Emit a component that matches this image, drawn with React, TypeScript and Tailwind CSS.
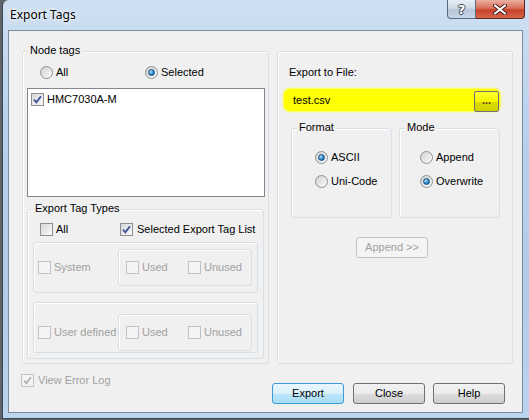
import React from "react";

const Check = ({ checked = false, disabled = false }: { checked?: boolean; disabled?: boolean }) => (
  <span
    className={`flex h-[13px] w-[13px] shrink-0 items-center justify-center border ${
      disabled ? "border-[#c2c2c2] bg-[#f4f4f4]" : "border-[#8e8f8f] bg-[linear-gradient(135deg,#d6d8da,#fafafa)]"
    }`}
  >
    {checked && (
      <svg width="9" height="9" viewBox="0 0 9 9">
        <path d="M1 4.6 L3.4 7.4 L8 1.2" fill="none" stroke={disabled ? "#b0b0b0" : "#3f4f96"} strokeWidth="1.8" />
      </svg>
    )}
  </span>
);

const Radio = ({ checked = false }: { checked?: boolean }) => (
  <span className="flex h-[13px] w-[13px] shrink-0 items-center justify-center rounded-full border border-[#8e8f8f] bg-[linear-gradient(135deg,#d0d2d4,#fbfbfb)]">
    {checked && (
      <span className="h-[7px] w-[7px] rounded-full border border-[#1c4f7e] bg-[radial-gradient(circle_at_35%_35%,#b6e2fb,#2a86cc_55%,#0d4b85)]" />
    )}
  </span>
);

const Group = ({ label, className = "", children }: { label?: string; className?: string; children?: React.ReactNode }) => (
  <div className={`relative rounded-[3px] border border-[#d5dfe5] shadow-[inset_1px_1px_0_#fff] ${className}`}>
    {label && <span className="absolute -top-[8px] left-[5px] bg-[#f0f0f0] px-[2px] leading-[13px]">{label}</span>}
    {children}
  </div>
);

const Btn = ({ children, kind = "normal", className = "" }: { children: React.ReactNode; kind?: "normal" | "default" | "disabled"; className?: string }) => {
  const look =
    kind === "default"
      ? "border-[#3c9bd8] bg-[linear-gradient(#eaf6fd,#d9f0fc_50%,#bee6fd_50%,#a9dcf6)] text-black"
      : kind === "disabled"
        ? "border-[#c0c3c6] bg-[#f4f4f4] text-[#a0a0a0]"
        : "border-[#707070] bg-[linear-gradient(#f2f2f2,#ebebeb_50%,#dddddd_50%,#cfcfcf)] text-black";
  return (
    <button className={`flex h-[21px] w-[72px] shrink-0 items-center justify-center rounded-[3px] border leading-[13px] ${look} ${className}`}>
      {children}
    </button>
  );
};

const Labeled = ({ children, disabled = false }: { children: React.ReactNode; disabled?: boolean }) => (
  <span className={disabled ? "text-[#a0a0a0]" : "text-black"}>{children}</span>
);

export default function App() {
  return (
    <div className="h-[420px] w-[529px] overflow-hidden bg-[#5f6468] font-['Liberation_Sans',Arial,sans-serif] text-[11px] leading-[13px]">
      <div className="ml-[2px] flex h-[419px] w-[527px] flex-col rounded-tl-[6px] border-b border-l border-[#3b4856] bg-[linear-gradient(180deg,#cfe0f2,#b8d1ec_30%,#b2cbe7_70%,#bcd4ee)]">
        {/* title bar */}
        <div className="flex h-[30px] shrink-0 items-start">
          <span className="pl-[7px] pt-[7px] font-['Noto_Sans',sans-serif] text-[12px] leading-[16px] text-black [text-shadow:0_0_6px_#fff,0_0_3px_#fff]">
            Export Tags
          </span>
          <div className="ml-auto mr-[4px] flex">
            <div className="flex h-[19px] w-[29px] items-center justify-center rounded-bl-[4px] border border-t-0 border-[#5b6a7b] bg-[linear-gradient(#e6eef6,#cfdbe8_45%,#b4c5d8_55%,#c9d8e8)]">
              <span className="font-['DejaVu_Sans',sans-serif] text-[13px] font-bold leading-[13px] text-white [text-shadow:1px_0_#3a4450,-1px_0_#3a4450,0_1px_#3a4450,0_-1px_#3a4450]">
                ?
              </span>
            </div>
            <div className="flex h-[19px] w-[49px] items-center justify-center rounded-br-[4px] border border-l-0 border-t-0 border-[#5a2a22] bg-[linear-gradient(#eab0a2,#d9705a_45%,#c7432b_55%,#d6664b)]">
              <svg width="14" height="11" viewBox="0 0 14 11">
                <path d="M2 1.5 L12 9.5 M12 1.5 L2 9.5" stroke="#4a2018" strokeWidth="4" strokeLinecap="round" />
                <path d="M2 1.5 L12 9.5 M12 1.5 L2 9.5" stroke="#fff" strokeWidth="2.2" strokeLinecap="round" />
              </svg>
            </div>
          </div>
        </div>

        {/* client area */}
        <div className="ml-[5px] flex h-[383px] w-[515px] flex-col border border-[#7b8da1] bg-[#f0f0f0]">
          <div className="flex gap-[8px] pl-[13px] pt-[20px]">
            {/* Node tags */}
            <Group label="Node tags" className="h-[313px] w-[247px]">
              <div className="flex items-center pl-[17px] pt-[14px]">
                <span className="flex w-[105px] items-center gap-[3px]">
                  <Radio />
                  <Labeled>All</Labeled>
                </span>
                <span className="flex items-center gap-[3px]">
                  <Radio checked />
                  <Labeled>Selected</Labeled>
                </span>
              </div>
              <div className="ml-[4px] mt-[9px] h-[109px] w-[238px] border border-[#828790] bg-white pl-[3px] pt-[4px]">
                <div className="flex items-center gap-[3px]">
                  <Check checked />
                  <span>HMC7030A-M</span>
                </div>
              </div>

              <Group label="Export Tag Types" className="ml-[4px] mt-[12px] h-[150px] w-[237px]">
                <div className="flex items-center pl-[12px] pt-[13px]">
                  <span className="flex w-[80px] items-center gap-[3px]">
                    <Check />
                    <Labeled>All</Labeled>
                  </span>
                  <span className="flex items-center gap-[4px]">
                    <Check checked />
                    <Labeled>Selected Export Tag List</Labeled>
                  </span>
                </div>

                <Group className="ml-[5px] mt-[6px] h-[51px] w-[225px] pt-[6px]">
                  <div className="flex items-center pl-[4px]">
                    <span className="flex w-[80px] items-center gap-[3px]">
                      <Check disabled />
                      <Labeled disabled>System</Labeled>
                    </span>
                    <Group className="flex h-[37px] w-[134px] items-center pl-[7px]">
                      <span className="flex w-[62px] items-center gap-[3px]">
                        <Check disabled />
                        <Labeled disabled>Used</Labeled>
                      </span>
                      <span className="flex items-center gap-[3px]">
                        <Check disabled />
                        <Labeled disabled>Unused</Labeled>
                      </span>
                    </Group>
                  </div>
                </Group>

                <Group className="ml-[5px] mt-[9px] h-[51px] w-[225px] pt-[11px]">
                  <div className="flex items-center pl-[4px]">
                    <span className="flex w-[80px] items-center gap-[3px]">
                      <Check disabled />
                      <Labeled disabled>User defined</Labeled>
                    </span>
                    <Group className="flex h-[37px] w-[134px] items-center pl-[7px]">
                      <span className="flex w-[62px] items-center gap-[3px]">
                        <Check disabled />
                        <Labeled disabled>Used</Labeled>
                      </span>
                      <span className="flex items-center gap-[3px]">
                        <Check disabled />
                        <Labeled disabled>Unused</Labeled>
                      </span>
                    </Group>
                  </div>
                </Group>
              </Group>
            </Group>

            {/* Export to file */}
            <Group className="h-[313px] w-[236px]">
              <div className="pl-[11px] pt-[14px]">Export to File:</div>
              <div className="ml-[6px] mt-[10px] flex h-[22px] w-[216px] items-start rounded-[6px] bg-[#ffff00] shadow-[0_0_2px_1px_#ffff40]">
                <span className="self-center pl-[9px]">test.csv</span>
                <button className="ml-auto mr-[1px] mt-[2px] flex h-[21px] w-[25px] items-center justify-center rounded-[2px] border border-[#707070] bg-[linear-gradient(#ffff30,#f5f500_50%,#dcdc00_50%,#d2d200)] pb-[3px] font-bold text-[#6a2b12]">
                  ...
                </button>
              </div>

              <div className="ml-[13px] mt-[17px] flex gap-[7px]">
                <Group label="Format" className="h-[90px] w-[101px]">
                  <div className="flex flex-col gap-[11px] pl-[23px] pt-[22px]">
                    <span className="flex items-center gap-[3px]">
                      <Radio checked />
                      <Labeled>ASCII</Labeled>
                    </span>
                    <span className="flex items-center gap-[3px]">
                      <Radio />
                      <Labeled>Uni-Code</Labeled>
                    </span>
                  </div>
                </Group>
                <Group label="Mode" className="h-[90px] w-[101px]">
                  <div className="flex flex-col gap-[11px] pl-[20px] pt-[22px]">
                    <span className="flex items-center gap-[3px]">
                      <Radio />
                      <Labeled>Append</Labeled>
                    </span>
                    <span className="flex items-center gap-[3px]">
                      <Radio checked />
                      <Labeled>Overwrite</Labeled>
                    </span>
                  </div>
                </Group>
              </div>

              <Btn kind="disabled" className="ml-[78px] mt-[19px]">
                Append &gt;&gt;
              </Btn>
            </Group>
          </div>

          {/* bottom row */}
          <div className="flex items-start pl-[12px] pt-[10px]">
            <span className="flex items-center gap-[4px]">
              <Check checked disabled />
              <Labeled disabled>View Error Log</Labeled>
            </span>
            <div className="ml-auto mr-[17px] mt-[9px] flex">
              <Btn kind="default">Export</Btn>
              <Btn className="ml-[9px]">Close</Btn>
              <Btn className="ml-[8px]">Help</Btn>
            </div>
          </div>
        </div>
      </div>
    </div>
  );
}
